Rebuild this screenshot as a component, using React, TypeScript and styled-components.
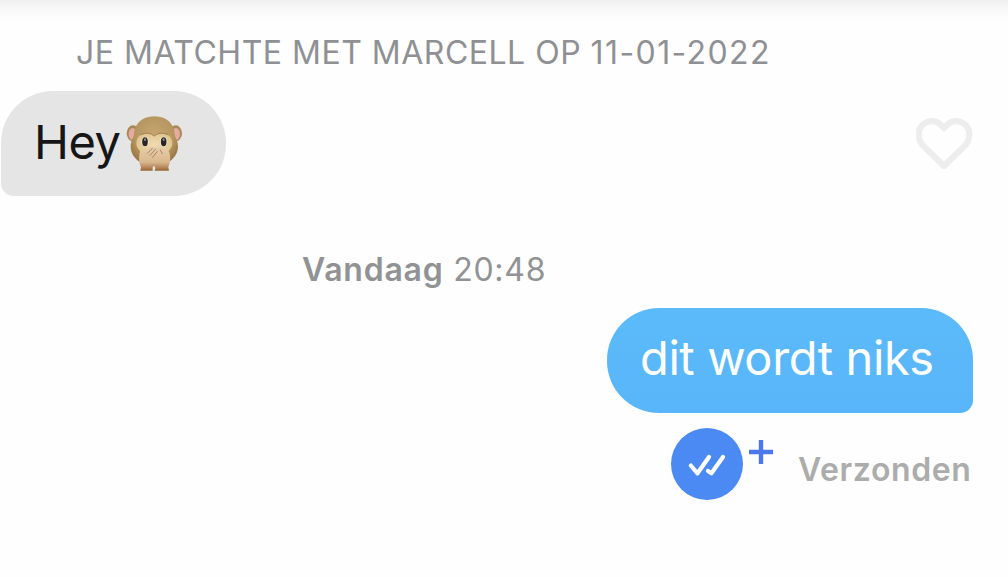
import React, { ReactNode } from 'react'
import styled, { createGlobalStyle, css } from 'styled-components'

const GlobalStyle = createGlobalStyle`
  *,
  *::before,
  *::after {
    box-sizing: border-box;
  }

  body {
    margin: 0;
    background: #fefefe;
    font-family: Inter, 'Liberation Sans', sans-serif;
  }
`

type Side = 'received' | 'sent'

type MessageProps = {
  side: Side
  children?: ReactNode
}

const MonkeyEmoji = (): JSX.Element => (
  <Emoji viewBox="18 21 174 174" role="img" aria-label="monkey">
    <defs>
      <radialGradient id="fur" cx="0.5" cy="0.4" r="0.62">
        <stop offset="0" stopColor="#c6a773" />
        <stop offset="0.65" stopColor="#b7975f" />
        <stop offset="1" stopColor="#94713f" />
      </radialGradient>
      <radialGradient id="face" cx="0.5" cy="0.45" r="0.6">
        <stop offset="0" stopColor="#f1dcb0" />
        <stop offset="1" stopColor="#dcc18d" />
      </radialGradient>
      <linearGradient id="hand" x1="0" y1="0" x2="0" y2="1">
        <stop offset="0" stopColor="#e8cfae" />
        <stop offset="0.65" stopColor="#dab88f" />
        <stop offset="0.85" stopColor="#b98c5e" />
        <stop offset="1" stopColor="#946639" />
      </linearGradient>
    </defs>
    <ellipse cx="39" cy="76" rx="19" ry="24" fill="#a98857" />
    <ellipse cx="167" cy="76" rx="19" ry="24" fill="#a98857" />
    <ellipse cx="38" cy="78" rx="12" ry="18" fill="#e5aaa0" />
    <ellipse cx="168" cy="78" rx="12" ry="18" fill="#e5aaa0" />
    <path
      d="M103 25C143 25 163 50 164 80C166 90 174 99 174 115C174 148 143 174 103 174C63 174 32 148 32 115C32 99 40 90 42 80C43 50 63 25 103 25Z"
      fill="url(#fur)"
    />
    <path
      d="M103 86C93 75 73 75 61 82C47 91 45 114 57 125C64 133 73 151 103 151C133 151 142 133 149 125C161 114 159 91 145 82C133 75 113 75 103 86Z"
      fill="url(#face)"
    />
    <path
      d="M61 80Q87 69 103 84Q119 69 145 80"
      fill="none"
      stroke="#a07e4c"
      strokeWidth="2.5"
    />
    <ellipse cx="75" cy="101" rx="11" ry="15" fill="#f8efdc" />
    <ellipse cx="131" cy="101" rx="11" ry="15" fill="#f8efdc" />
    <ellipse cx="75" cy="101" rx="8.5" ry="13.5" fill="#292725" />
    <ellipse cx="131" cy="101" rx="8.5" ry="13.5" fill="#292725" />
    <ellipse cx="75" cy="95" rx="3" ry="4" fill="#8e8e8e" />
    <ellipse cx="131" cy="95" rx="3" ry="4" fill="#8e8e8e" />
    <path
      d="M147 188L145 177C152 162 152 146 148 133Q141 124 139 133L133 121Q126 112 123 119L120 115Q113 110 112 119L98 137L98 165L106 180L104 188Z"
      fill="url(#hand)"
    />
    <path
      d="M61 188L63 177C55 160 57 146 60 131Q66 124 69 135L92 116Q99 111 101 118Q108 113 109 121Q115 121 113 128Q119 129 116 137L109 162L98 178L98 188Z"
      fill="url(#hand)"
    />
    <path
      d="M82 136L97 121M90 142L107 123M98 148L112 130M121 126L127 137"
      fill="none"
      stroke="#a98460"
      strokeWidth="3"
      strokeLinecap="round"
    />
  </Emoji>
)

const LikeButton = (): JSX.Element => (
  <Like type="button" aria-label="Like">
    <svg width="57" height="52" viewBox="0 0 57 52" fill="none">
      <path
        d="M28 47.5L8.2 28.4C1.2 21.3 1.3 12.2 5.8 7.2C11.4 1.3 19.8 1.5 24.7 6.4L28 9.7L31.3 6.4C36.2 1.5 44.6 1.3 50.2 7.2C54.7 12.2 54.8 21.3 47.8 28.4Z"
        transform="translate(0 0.4)"
        stroke="#ededed"
        strokeWidth="6.2"
        strokeLinejoin="round"
      />
    </svg>
  </Like>
)

const ReadReceipt = (): JSX.Element => (
  <Receipt>
    <ReceiptBadge>
      <svg width="72" height="72" viewBox="0 0 72 72" fill="none">
        <path
          d="M19.8 37.5L26.5 45.3L38 29M37 43L40.4 45.3L52 29"
          stroke="#fff"
          strokeWidth="4.2"
          strokeLinecap="round"
          strokeLinejoin="round"
        />
      </svg>
    </ReceiptBadge>
    <svg width="24" height="24" viewBox="0 0 24 24">
      <path d="M0 12H24M12 0V24" stroke="#4d78ec" strokeWidth="4.4" />
    </svg>
  </Receipt>
)

const Message = ({ side, children }: MessageProps): JSX.Element => (
  <Row $side={side}>
    <Bubble $side={side}>{children}</Bubble>
    {side === 'received' && <LikeButton />}
  </Row>
)

const App = (): JSX.Element => (
  <>
    <GlobalStyle />
    <Chat>
      <HeaderShadow />
      <MatchLine>
        JE MATCHTE MET MARCELL OP <MatchDate>11-01-2022</MatchDate>
      </MatchLine>
      <Message side="received">
        <span>Hey</span>
        <MonkeyEmoji />
      </Message>
      <Timestamp>
        <Day>Vandaag</Day> 20:48
      </Timestamp>
      <Message side="sent">
        <span>dit wordt niks</span>
      </Message>
      <StatusRow>
        <ReadReceipt />
        <Status>Verzonden</Status>
      </StatusRow>
    </Chat>
  </>
)

const Chat = styled.main`
  display: flex;
  flex-direction: column;
  width: 1008px;
  height: 577px;
  overflow: hidden;
  background: #fefefe;
`

const HeaderShadow = styled.div`
  flex: none;
  height: 22px;
  background: linear-gradient(#efefef, #f8f8f8 40%, #fefefe);
`

const MatchLine = styled.div`
  height: 69px;
  padding-left: 76px;
  color: #8f9093;
  font-size: 32px;
  line-height: 62px;
  letter-spacing: 0.5px;
  white-space: nowrap;
`

const MatchDate = styled.span`
  letter-spacing: 1.4px;
`

const Row = styled.div<{ $side: Side }>`
  display: flex;
  flex: none;
  align-items: center;
  justify-content: ${({ $side }) =>
    $side === 'sent' ? 'flex-end' : 'space-between'};
  height: 105px;
  padding: 0 35px 0 1px;
`

const Bubble = styled.div<{ $side: Side }>`
  display: flex;
  align-items: center;
  height: 105px;
  font-size: 47px;
  line-height: 100px;
  white-space: nowrap;

  ${({ $side }) =>
    $side === 'sent'
      ? css`
          width: 366px;
          padding: 0 0 5px 33px;
          border-radius: 52px 52px 13px 52px;
          background: linear-gradient(#5bbbfa, #59b5f9);
          color: #fff;
          letter-spacing: -0.4px;
        `
      : css`
          width: 225px;
          padding: 0 0 3px 33px;
          border-radius: 52px 52px 52px 13px;
          background: #e5e5e5;
          color: #161616;
          letter-spacing: -0.5px;
        `}
`

const Emoji = styled.svg`
  width: 58px;
  height: 58px;
  margin: 4px 0 0 6px;
`

const Like = styled.button`
  display: flex;
  padding: 0;
  border: 0;
  background: none;
`

const Timestamp = styled.div`
  height: 112px;
  padding-left: 302px;
  color: #919294;
  font-size: 32px;
  line-height: 148px;
  letter-spacing: 0.75px;
  white-space: nowrap;
`

const Day = styled.span`
  font-weight: 600;
`

const StatusRow = styled.div`
  display: flex;
  justify-content: flex-end;
  padding: 15px 36px 0 0;
`

const Receipt = styled.div`
  display: flex;
  gap: 6px;

  > svg {
    margin-top: 12px;
  }
`

const ReceiptBadge = styled.div`
  width: 72px;
  height: 72px;
  border-radius: 50%;
  background: #4a8af2;
`

const Status = styled.div`
  width: 174px;
  margin-left: 25px;
  color: #acacac;
  font-size: 32px;
  font-weight: 600;
  line-height: 83px;
  letter-spacing: 0.6px;
  white-space: nowrap;
`

export default App
